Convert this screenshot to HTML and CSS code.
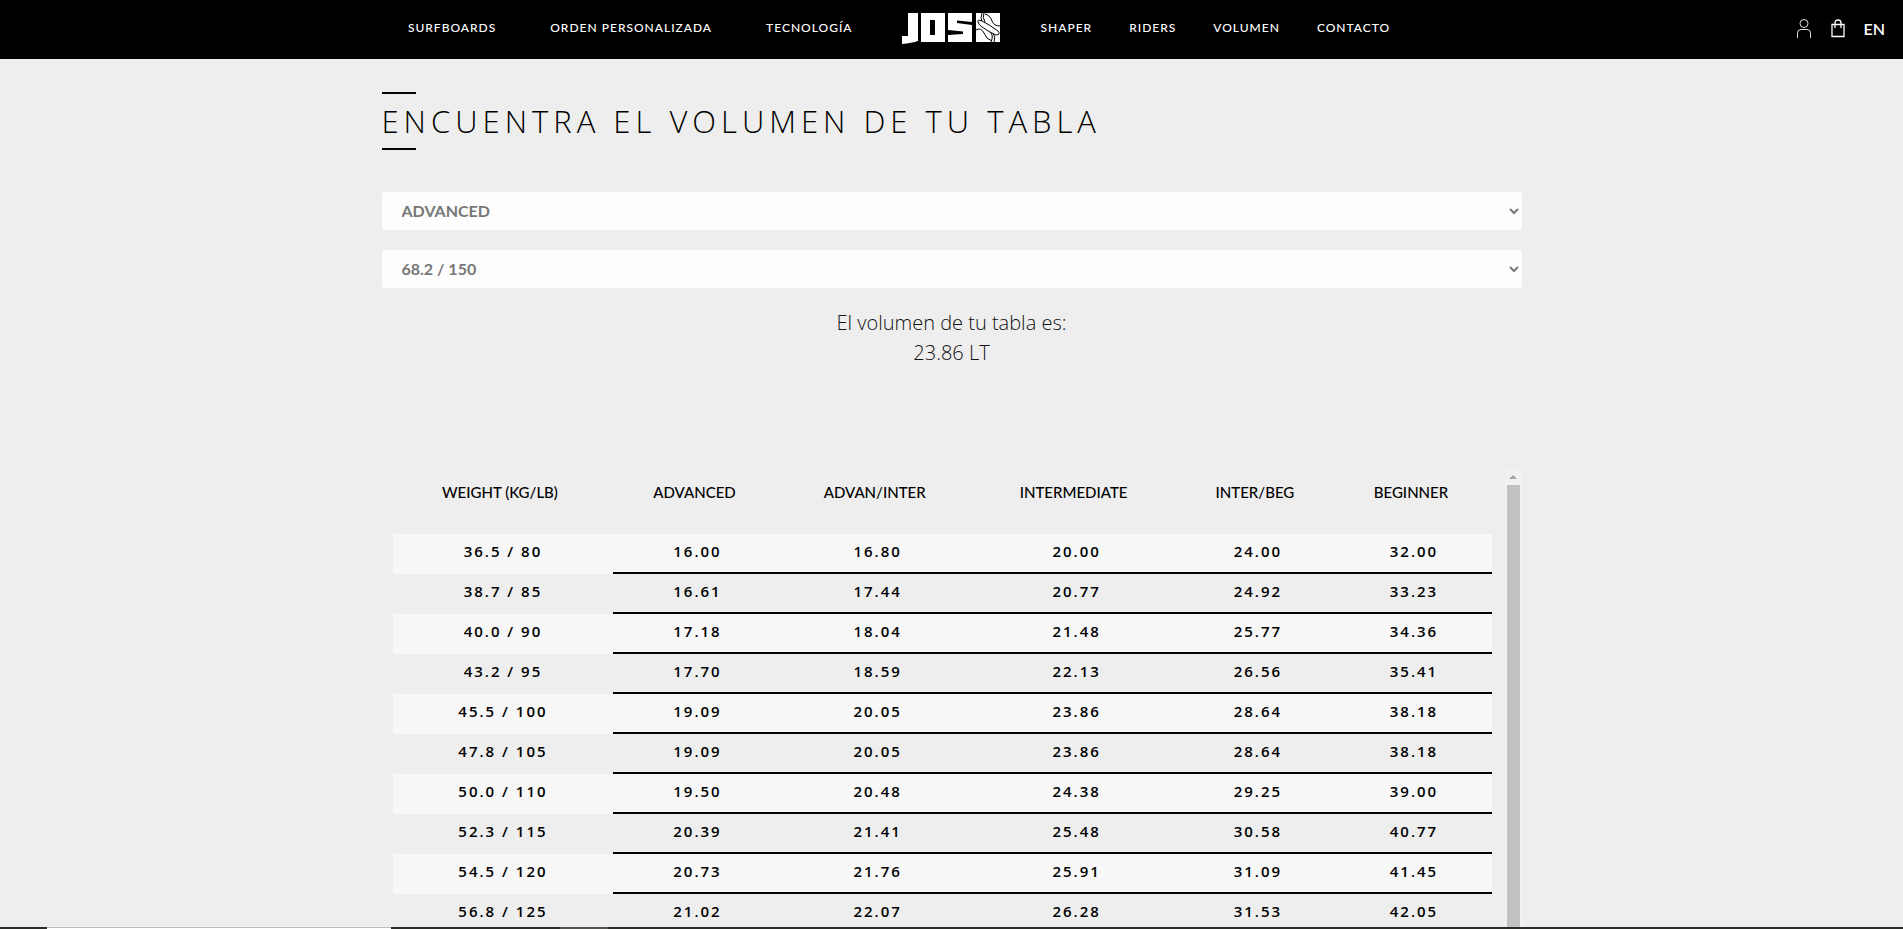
FILE: index.html
```html
<!DOCTYPE html>
<html lang="es">
<head>
    <meta charset="UTF-8">
    <meta name="viewport" content="width=device-width, initial-scale=1.0">
    <title>Volumen</title>
    <link rel="stylesheet" href="styles.css">
</head>
<body>

    <header class="header">
        <nav class="nav nav-left">
            <a href="#">SURFBOARDS</a>
            <a href="#">ORDEN PERSONALIZADA</a>
            <a href="#">TECNOLOGÍA</a>
        </nav>
        <a href="#" class="logo" aria-label="Inicio">
            <svg width="98" height="32" viewBox="0 0 98 32">
                <g fill="#fff">
                    <path d="M6 0H16V28Q10 30 0 31V23H6Z"/>
                    <path fill-rule="evenodd" d="M19 0H43V29H19ZM28 7V22H33V7Z"/>
                    <path d="M46 0H70V9L55 7.500V10L70 12V29H46V22L61 21V18.500L46 17Z"/>
                    <path d="M74 0H98V29H74Z"/>
                </g>
                <g fill="#fff" stroke="#000" stroke-width="1">
                    <path d="M80 0Q78 5 80 9M82 0Q80 4 83 9M83 1Q88 2 90 8Q92 13 98 13M74 17Q79 14 82 20Q84 26 90 28M91 20Q94 24 92 29M88 19Q92 22 89 29" fill="none"/>
                    <path d="M76 9Q75 6 80 8Q88 12 96 18Q99 22 94 22Q87 19 80 14Q77 12 76 9Z"/>
                </g>
            </svg>
        </a>
        <nav class="nav nav-right">
            <a href="#">SHAPER</a>
            <a href="#">RIDERS</a>
            <a href="#">VOLUMEN</a>
            <a href="#">CONTACTO</a>
        </nav>
        <div class="tools">
            <a href="#" aria-label="Cuenta">
                <svg width="16" height="19" viewBox="0 0 16 19" fill="none" stroke="#ddd">
                    <circle cx="8" cy="4.5" r="4"/>
                    <path d="M1.5 19V14Q1.5 10.5 5 10.5H11Q14.5 10.5 14.5 14V19"/>
                </svg>
            </a>
            <a href="#" aria-label="Carrito">
                <svg width="14" height="19" viewBox="0 0 14 19" fill="none" stroke="#fff" stroke-width="1.3">
                    <path d="M1 5.5H13V17.5H1Z M4 9V4Q4 1 7 1Q10 1 10 4V9"/>
                </svg>
            </a>
            <a href="#" class="lang">EN</a>
        </div>
    </header>

    <main class="container">
        <h1 class="title">ENCUENTRA EL VOLUMEN DE TU TABLA</h1>

        <form class="calc">
            <select id="level" aria-label="Nivel">
                <option>ADVANCED</option>
                <option>ADVAN/INTER</option>
                <option>INTERMEDIATE</option>
                <option>INTER/BEG</option>
                <option>BEGINNER</option>
            </select>
            <select id="weight" aria-label="Peso">
                <option>68.2 / 150</option>
            </select>
        </form>

        <p class="result">El volumen de tu tabla es:<br>23.86 LT</p>

        <div class="table-wrap">
            <div class="table-scroll">
                <table class="volumes">
                    <colgroup>
                        <col class="col-weight">
                        <col class="col-adv">
                        <col class="col-advint">
                        <col class="col-int">
                        <col class="col-intbeg">
                        <col class="col-beg">
                    </colgroup>
                    <thead>
                        <tr><th>WEIGHT (KG/LB)</th><th>ADVANCED</th><th>ADVAN/INTER</th><th>INTERMEDIATE</th><th>INTER/BEG</th><th>BEGINNER</th></tr>
                    </thead>
                    <tbody>
                        <tr><td>36.5 / 80</td><td>16.00</td><td>16.80</td><td>20.00</td><td>24.00</td><td>32.00</td></tr>
                        <tr><td>38.7 / 85</td><td>16.61</td><td>17.44</td><td>20.77</td><td>24.92</td><td>33.23</td></tr>
                        <tr><td>40.0 / 90</td><td>17.18</td><td>18.04</td><td>21.48</td><td>25.77</td><td>34.36</td></tr>
                        <tr><td>43.2 / 95</td><td>17.70</td><td>18.59</td><td>22.13</td><td>26.56</td><td>35.41</td></tr>
                        <tr><td>45.5 / 100</td><td>19.09</td><td>20.05</td><td>23.86</td><td>28.64</td><td>38.18</td></tr>
                        <tr><td>47.8 / 105</td><td>19.09</td><td>20.05</td><td>23.86</td><td>28.64</td><td>38.18</td></tr>
                        <tr><td>50.0 / 110</td><td>19.50</td><td>20.48</td><td>24.38</td><td>29.25</td><td>39.00</td></tr>
                        <tr><td>52.3 / 115</td><td>20.39</td><td>21.41</td><td>25.48</td><td>30.58</td><td>40.77</td></tr>
                        <tr><td>54.5 / 120</td><td>20.73</td><td>21.76</td><td>25.91</td><td>31.09</td><td>41.45</td></tr>
                        <tr><td>56.8 / 125</td><td>21.02</td><td>22.07</td><td>26.28</td><td>31.53</td><td>42.05</td></tr>
                    </tbody>
                </table>
            </div>
            <div class="scrollbar" aria-hidden="true">
                <span class="arrow-up"></span>
                <span class="thumb"></span>
            </div>
        </div>
    </main>

    <div class="bottom-bar"><span class="seg-light"></span><span class="seg-gray"></span></div>

</body>
</html>
```
FILE: styles.css
```css
* {
    box-sizing: border-box;
}

body {
    margin: 0;
    height: 100vh;
    display: flex;
    flex-direction: column;
    overflow: hidden;
    background: #eee;
    color: #000;
    font-family: Lato, "Open Sans", sans-serif;
}

a {
    color: #fff;
    text-decoration: none;
}

.header {
    position: relative;
    display: grid;
    grid-template-columns: 1fr 98px 1fr;
    align-items: center;
    height: 59px;
    padding-right: 2px;
    background: #000;
}

.nav {
    display: flex;
    font-size: 12px;
    font-weight: 500;
    line-height: 16px;
    letter-spacing: 1px;
    padding-bottom: 3px;
}

.nav-left {
    justify-content: flex-end;
    gap: 54px;
    padding-right: 49px;
}

.nav-right {
    gap: 37px;
    padding-left: 41px;
}

.logo {
    display: flex;
    padding-bottom: 1px;
}

.tools {
    position: absolute;
    top: 0;
    right: 18px;
    height: 56px;
    display: flex;
    align-items: center;
    gap: 19px;
}

.tools a {
    display: flex;
}

.tools .lang {
    font-size: 16px;
    font-weight: 600;
}

.container {
    flex: 1;
    display: flex;
    flex-direction: column;
    width: 100%;
    max-width: 1140px;
    min-height: 0;
    margin: 0 auto;
    padding-top: 33px;
}

.title {
    margin: 0 0 42px;
    font-family: "Open Sans", sans-serif;
    font-size: 31px;
    font-weight: 300;
    line-height: 54px;
    letter-spacing: 5px;
}

.title::before,
.title::after {
    content: "";
    display: block;
    width: 34px;
    height: 2px;
    background: #000;
}

.calc {
    display: flex;
    flex-direction: column;
    gap: 20px;
}

.calc select {
    width: 100%;
    height: 38px;
    padding: 0 0 2px 16px;
    border: 0;
    border-radius: 3px;
    background: #fdfdfd;
    color: #777;
    font-family: Lato, sans-serif;
    font-size: 16px;
    font-weight: 700;
}

.result {
    margin: 20px 0 102px;
    color: #111;
    font-family: "Open Sans", sans-serif;
    font-size: 20px;
    font-weight: 300;
    line-height: 30px;
    text-align: center;
}

.table-wrap {
    flex: 1;
    display: flex;
    min-height: 0;
}

.table-scroll {
    flex: 1;
    padding: 0 13px 0 11px;
    overflow: hidden;
}

.scrollbar {
    display: flex;
    flex-direction: column;
    width: 17px;
    padding: 5px 2px 0;
    background: #f1f1f1;
}

.arrow-up {
    align-self: center;
    margin-bottom: 6px;
    border: 4px solid transparent;
    border-top: 0;
    border-bottom-color: #a3a3a3;
}

.thumb {
    flex: 1;
    background: #c1c1c1;
}

.volumes {
    width: 100%;
    border-collapse: separate;
    border-spacing: 0;
    table-layout: fixed;
    text-align: center;
}

.col-weight { width: 20.1%; }
.col-adv { width: 15.3%; }
.col-advint { width: 17.5%; }
.col-int { width: 18.7%; }
.col-intbeg { width: 14.3%; }
.col-beg { width: 14.1%; }

.volumes th {
    height: 64px;
    padding: 0 6px 20px 0;
    font-size: 15px;
    font-weight: 500;
}

.volumes td {
    height: 40px;
    padding: 0 0 4px;
    font-family: "Open Sans", sans-serif;
    font-size: 15px;
    font-weight: 600;
    letter-spacing: 2px;
    line-height: 20px;
    border-bottom: 2px solid #000;
}

.volumes td:first-child {
    border-bottom-color: transparent;
}

.volumes tbody tr:nth-child(odd) {
    background: #f7f7f7;
}

.bottom-bar {
    position: fixed;
    left: 0;
    right: 0;
    bottom: 0;
    display: flex;
    height: 2px;
    background: #2b2a24;
}

.seg-light {
    width: 344px;
    margin-left: 47px;
    background: #fff;
    border-top: 1px solid #bbb;
}

.seg-gray {
    width: 48px;
    margin-left: 169px;
    background: #55534d;
}
```
